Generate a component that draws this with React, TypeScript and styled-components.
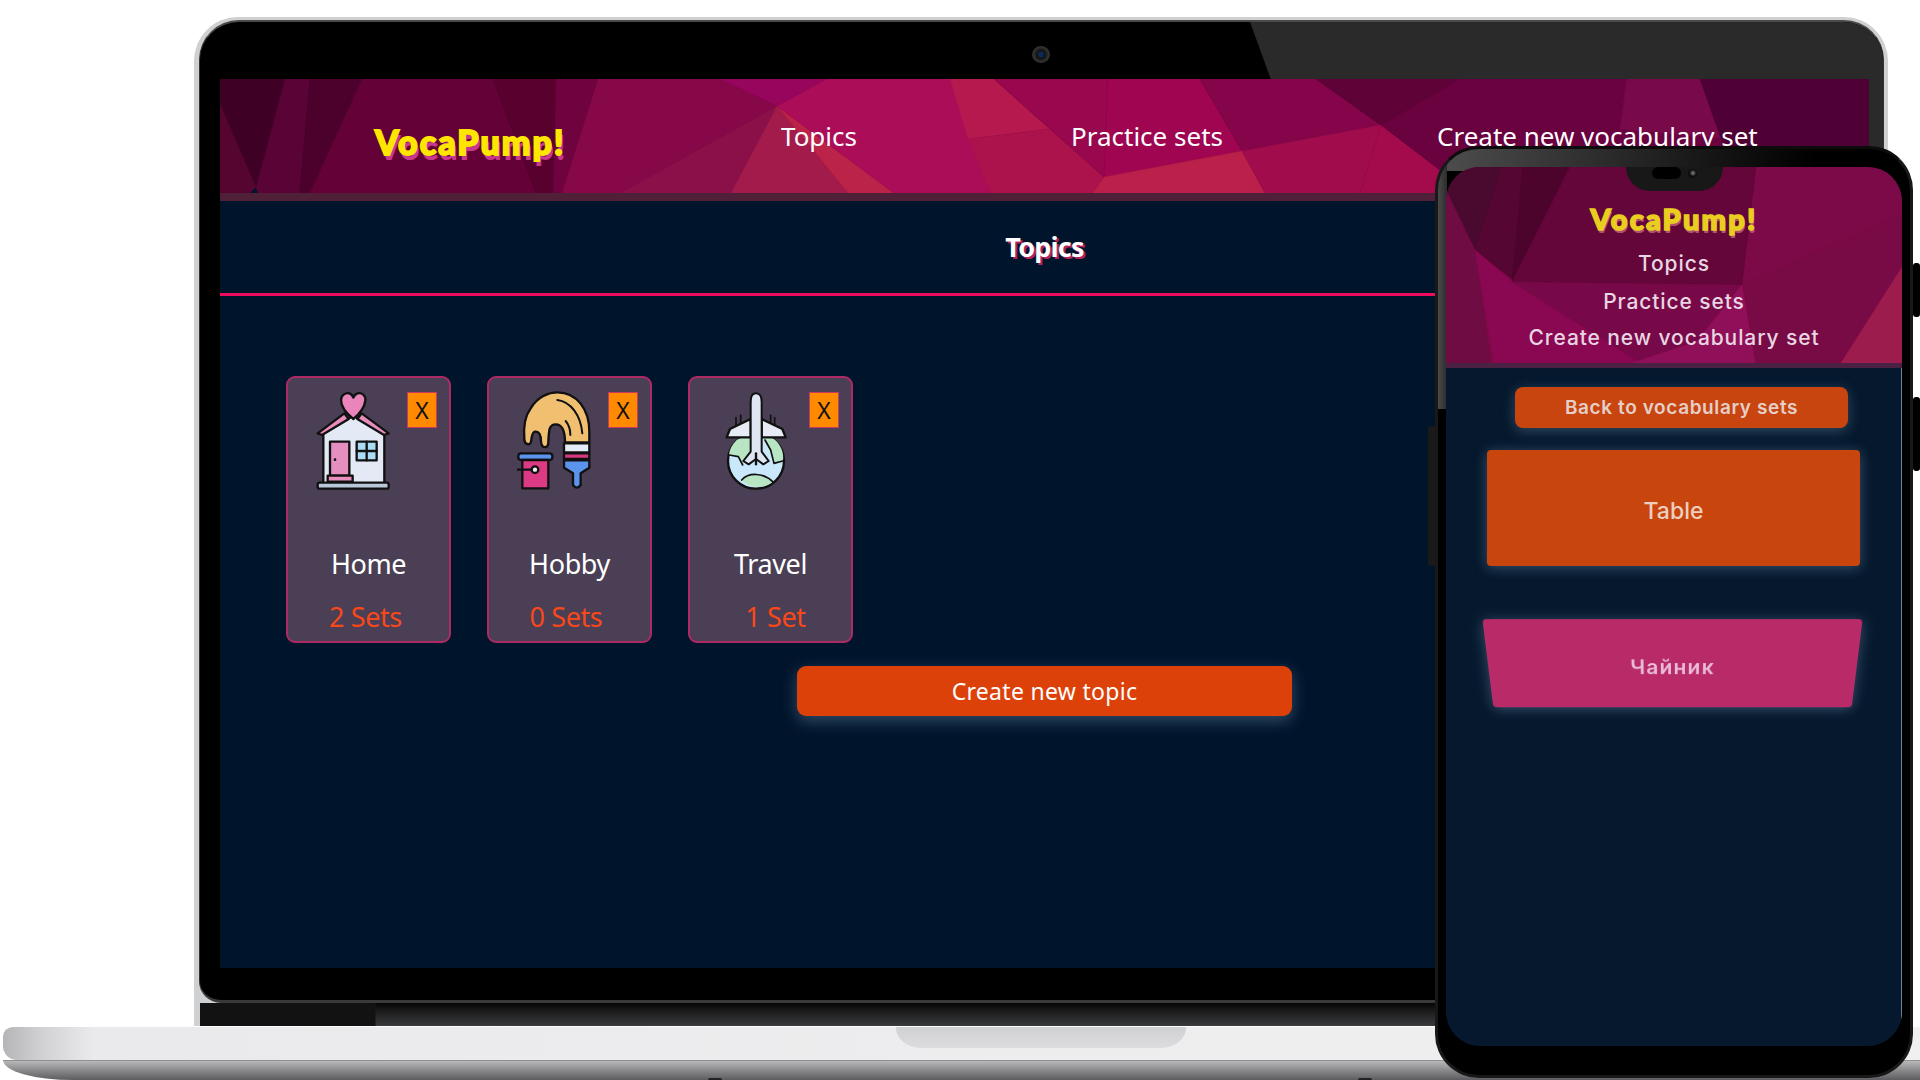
import React from "react";
import styled, { createGlobalStyle } from "styled-components";

const Global = createGlobalStyle`
  html, body { margin: 0; padding: 0; background: #fff; }
  * { box-sizing: border-box; }
`;

const LAPTOP_FONT = `"Noto Sans", "Open Sans", sans-serif`;
const PHONE_FONT = `Inter, "Noto Sans", sans-serif`;

const Stage = styled.div`
  position: relative;
  width: 1920px;
  height: 1080px;
  overflow: hidden;
  background: #fff;
`;

/* ---------- laptop lid ---------- */
const LidShell = styled.div`
  position: absolute;
  left: 194px;
  top: 17px;
  width: 1694px;
  height: 1010px;
  display: flex;
  flex-direction: column;
  padding: 3px 4px 0 5px;
  border-radius: 44px 44px 0 0;
  background: #cfd0d2;
`;
const Bezel = styled.div`
  position: relative;
  flex: none;
  height: 983px;
  padding: 0 15px 0 20px;
  border-top: 2px solid #4a4a4a;
  border-left: 1px solid #333;
  border-right: 1px solid #333;
  border-bottom: 3px solid #3a3a3c;
  border-radius: 40px 40px 22px 22px;
  background: #000;
  overflow: hidden;
`;
const Glare = styled.div`
  position: absolute;
  left: 1050px;
  top: 0;
  width: 640px;
  height: 981px;
  background: #2a2a2a;
  clip-path: polygon(0 0, 100% 0, 100% 100%, 356px 100%);
`;
const CameraBar = styled.div`
  height: 57px;
  display: flex;
  align-items: center;
  justify-content: center;
  padding: 7px 6px 0 0;
`;
const Camera = styled.div`
  width: 18px;
  height: 17px;
  border-radius: 50%;
  background: radial-gradient(circle at 50% 50%, #0b2a58 0 18%, #111 30%, #333 62%, #1a1a1a 100%);
`;
const Hinge = styled.div`
  flex: 1;
  margin-left: 1px;
  background: linear-gradient(90deg, #121212 0 175px, transparent 176px),
    linear-gradient(180deg, #050505 0%, #1a1a1b 30%, #3c3d3f 100%);
`;

const Screen = styled.div`
  position: relative;
  width: 1649px;
  height: 889px;
  background: #00142c;
  display: flex;
  flex-direction: column;
`;
const Header = styled.header`
  position: relative;
  flex: none;
  height: 122px;
  display: flex;
  align-items: center;
  gap: 214px;
  padding: 0 0 1px 155px;
  border-bottom: 8px solid #4f2038;
  font-family: ${LAPTOP_FONT};
  overflow: hidden;
`;
const HeaderArt = styled.svg`
  position: absolute;
  inset: 0;
  width: 100%;
  height: 100%;
`;
const Logo = styled.div`
  position: relative;
  width: 192px;
  margin-top: 13px;
  font-family: Lato, sans-serif;
  font-weight: 900;
  font-size: 34px;
  line-height: 44px;
  letter-spacing: 2px;
  color: #ffe600;
  -webkit-text-stroke: 1.8px #ffe600;
  text-shadow: 2px 5px 0 #c8388f;
  white-space: nowrap;
`;
const NavLink = styled.a`
  position: relative;
  font-size: 26px;
  line-height: 34px;
  color: #fff;
  white-space: nowrap;
`;
const TitleBar = styled.div`
  flex: none;
  height: 95px;
  padding-bottom: 2px;
  display: flex;
  align-items: center;
  justify-content: center;
  border-bottom: 3px solid #ee0a5c;
`;
const Title = styled.h1`
  margin: 0;
  font-family: ${LAPTOP_FONT};
  font-weight: 700;
  font-size: 27px;
  letter-spacing: -0.8px;
  color: #fff;
  text-shadow: 2px 2px 0 #b0245c;
`;
const Cards = styled.div`
  display: flex;
  gap: 36px;
  padding: 80px 0 0 66px;
`;
const Card = styled.article`
  position: relative;
  width: 165px;
  height: 267px;
  padding: 12px 0 0 28px;
  border: 2px solid #ad2a65;
  border-radius: 9px;
  background: #4a3f55;
  display: flex;
  flex-direction: column;
  font-family: ${LAPTOP_FONT};
`;
const CardIcon = styled.svg`
  width: 80px;
  height: 100px;
  flex: none;
`;
const Remove = styled.button`
  position: absolute;
  top: 14px;
  right: 12px;
  width: 30px;
  height: 36px;
  padding: 0;
  border: 1.5px solid #c93a63;
  background: #ff8a00;
  color: #111;
  font-family: ${LAPTOP_FONT};
  font-size: 23px;
  line-height: 30px;
  text-align: center;
`;
const CardName = styled.div`
  margin: 58px 0 0 -28px;
  font-size: 27px;
  line-height: 32px;
  color: #fff;
  text-align: center;
  letter-spacing: -0.4px;
`;
const CardCount = styled.div<{ $before: number; $after: number }>`
  margin: 21px 0 0 -28px;
  padding-left: ${(p) => p.$before}px;
  padding-right: ${(p) => p.$after}px;
  font-size: 27px;
  line-height: 32px;
  color: #f8481a;
  text-align: center;
  letter-spacing: -0.4px;
`;
const CreateRow = styled.div`
  display: flex;
  justify-content: center;
  margin-top: 23px;
`;
const CreateButton = styled.button`
  width: 495px;
  height: 50px;
  border: 0;
  border-radius: 9px;
  background: #dc410a;
  color: #fff;
  font-family: ${LAPTOP_FONT};
  font-size: 23px;
  letter-spacing: 0.3px;
  box-shadow: 0 5px 16px rgba(130, 170, 200, 0.38);
`;

/* ---------- laptop base ---------- */
const Base = styled.div`
  position: absolute;
  left: 3px;
  right: 0;
  top: 1026px;
  height: 54px;
  display: flex;
  flex-direction: column;
`;
const BaseDeck = styled.div`
  flex: none;
  height: 34px;
  padding-left: 893px;
  border-radius: 10px 0 0 14px;
  border-top: 1px solid #fff;
  background: linear-gradient(90deg, #b5b5b7 0, #d2d2d4 40px, #eaeaec 90px, #f0f0f1 100%);
`;
const Notch = styled.div`
  width: 290px;
  height: 21px;
  border-radius: 0 0 26px 26px / 0 0 20px 20px;
  background: linear-gradient(180deg, #d0d1d3, #dcdcde);
`;
const BaseLip = styled.div`
  flex: 1;
  position: relative;
  display: flex;
  align-items: flex-end;
  border-top: 1px solid #909092;
  border-radius: 0 0 0 70px / 0 0 0 20px;
  background: linear-gradient(180deg, #b8b8ba 0%, #8d8d90 45%, #5d5d61 100%);
`;
const Foot = styled.span<{ $gap: number }>`
  width: 14px;
  height: 2px;
  margin-left: ${(p) => p.$gap}px;
  border-radius: 4px 4px 0 0;
  background: #222;
`;

/* ---------- phone ---------- */
const Phone = styled.div`
  position: absolute;
  left: 1435px;
  top: 146px;
  width: 478px;
  height: 932px;
  padding: 18px 8px 29px 8px;
  border: 3px solid #181818;
  border-top-color: #0c0c0c;
  border-radius: 44px;
  background: linear-gradient(90deg, #4a4a4a, #2c2c2c) 0 0 / 9px 260px no-repeat,
    linear-gradient(90deg, #4e4e4e, #222 45%, #000 80%) 0 0 / 100% 22px no-repeat, #000;
`;
const SideKey = styled.span<{ $side: "left" | "right"; $top: number; $height: number }>`
  position: absolute;
  ${(p) => (p.$side === "left" ? "left: -10px;" : "right: -10px;")}
  top: ${(p) => p.$top}px;
  width: 7px;
  height: ${(p) => p.$height}px;
  border-radius: 3px;
  background: ${(p) => (p.$side === "left" ? "#1a1a1a" : "#000")};
`;
const PhoneScreen = styled.div`
  position: relative;
  height: 100%;
  border-radius: 34px;
  overflow: hidden;
  background: #05182d;
  display: flex;
  flex-direction: column;
  font-family: ${PHONE_FONT};
`;
const NotchCut = styled.div`
  position: absolute;
  left: 180px;
  top: 0;
  width: 97px;
  height: 24px;
  display: flex;
  align-items: flex-start;
  justify-content: center;
  gap: 7px;
  background: #181818;
  border-radius: 0 0 24px 24px;
`;
const Speaker = styled.span`
  width: 29px;
  height: 12px;
  border-radius: 7px;
  background: #000;
`;
const FrontCam = styled.span`
  width: 9px;
  height: 9px;
  margin-top: 2px;
  border-radius: 50%;
  background: radial-gradient(circle at 55% 45%, #666 0 15%, #111 45%, #000);
`;
const PhoneHeader = styled.header`
  position: relative;
  flex: none;
  height: 201px;
  padding-top: 34px;
  border-bottom: 5px solid #4a2142;
  display: flex;
  flex-direction: column;
  align-items: center;
  overflow: hidden;
`;
const PhoneLogo = styled.div`
  position: relative;
  font-family: Lato, sans-serif;
  font-weight: 900;
  font-size: 29px;
  line-height: 36px;
  letter-spacing: 2.2px;
  color: #e9cd1f;
  -webkit-text-stroke: 1.6px #e9cd1f;
  text-shadow: 1px 3px 0 #b0506a;
  white-space: nowrap;
`;
const PhoneNav = styled.a<{ $gap: number }>`
  position: relative;
  margin-top: ${(p) => p.$gap}px;
  font-size: 21px;
  line-height: 26px;
  font-weight: 500;
  letter-spacing: 0.9px;
  color: #e8d6e2;
  white-space: nowrap;
`;
const PhoneMain = styled.main`
  flex: 1;
  display: flex;
  flex-direction: column;
  border-right: 1px solid #6f8499;
`;
const BackButton = styled.button`
  align-self: flex-start;
  width: 333px;
  height: 41px;
  margin: 19px 0 0 69px;
  border: 0;
  border-radius: 8px;
  background: #c8450f;
  color: #e6cfc8;
  font-family: ${PHONE_FONT};
  font-size: 19px;
  font-weight: 600;
  letter-spacing: 0.6px;
  box-shadow: 0 3px 14px rgba(110, 145, 175, 0.42);
`;
const WordTile = styled.div`
  align-self: flex-start;
  width: 373px;
  height: 116px;
  margin: 22px 0 0 41px;
  padding-top: 5px;
  display: flex;
  align-items: center;
  justify-content: center;
  border-radius: 4px;
  background: #c8450d;
  color: #eccfc0;
  font-size: 23px;
  font-weight: 500;
  box-shadow: 0 2px 14px rgba(110, 145, 175, 0.48);
`;
const FlippedTile = styled.div`
  align-self: center;
  width: 369px;
  height: 95px;
  margin: 51px 0 0 -2px;
  padding-top: 5px;
  display: flex;
  align-items: center;
  justify-content: center;
  border-radius: 4px;
  background: #b92a68;
  color: #e8bcd6;
  font-size: 21px;
  font-weight: 600;
  letter-spacing: 1.2px;
  transform: perspective(600px) rotateX(-22deg);
  box-shadow: 0 2px 14px rgba(110, 145, 175, 0.48);
`;

/* ---------- artwork ---------- */
type Poly = [string, string];

const laptopPolys: Poly[] = [
  ["0,0 65,0 36,108 0,25", "#3f0025"],
  ["0,25 36,108 30,114 0,114", "#560530"],
  ["65,0 90,0 80,114 38,114 36,108", "#590336"],
  ["90,0 142,0 90,114 80,114", "#4c012c"],
  ["142,0 273,0 316,114 90,114", "#640238"],
  ["273,0 336,0 333,114 316,114", "#58012f"],
  ["336,0 378,0 342,114 333,114", "#6e0340"],
  ["378,0 500,0 557,27 400,114 342,114", "#870849"],
  ["500,0 607,0 557,27", "#98055c"],
  ["557,27 400,114 511,114", "#8b0f48"],
  ["557,27 511,114 628,114", "#a31b4b"],
  ["557,27 628,114 674,114", "#bb2349"],
  ["607,0 730,0 770,114 674,114 557,27", "#ab0d58"],
  ["730,0 774,0 830,50 748,60", "#b5194d"],
  ["748,60 830,50 884,98 873,114 770,114", "#ac124c"],
  ["774,0 888,0 884,98", "#99074f"],
  ["888,0 980,0 1022,72 884,98", "#9f0550"],
  ["980,0 1096,0 1161,46 1022,72", "#85054a"],
  ["1096,0 1239,0 1161,46", "#5f0238"],
  ["884,98 1022,72 1045,114 873,114", "#bb204a"],
  ["1022,72 1161,46 1140,114 1045,114", "#a10d4c"],
  ["1161,46 1140,114 1250,114", "#a40b4c"],
  ["1239,0 1649,0 1649,114 1250,114 1161,46", "#6a0240"],
  ["1407,0 1480,0 1510,60 1400,50", "#780a4a"],
  ["1480,0 1649,0 1649,114 1520,114", "#4f0136"],
];

const phonePolys: Poly[] = [
  ["0,0 456,0 456,196 0,196", "#7d0a48"],
  ["0,0 56,0 29,83 0,23", "#4a0a2f"],
  ["0,23 29,83 45,196 0,196", "#6f0c43"],
  ["56,0 77,0 67,113 29,83", "#560632"],
  ["77,0 124,0 66,115", "#4c042c"],
  ["124,0 310,0 296,118 66,115", "#64063a"],
  ["29,83 66,115 195,196 48,196", "#8a0852"],
  ["66,115 296,118 250,175 185,196 195,196", "#780949"],
  ["296,118 250,175 185,196 310,196", "#8f0f58"],
  ["297,118 456,47 456,100 395,196 310,196", "#780a45"],
  ["456,100 456,196 395,196", "#9c1d4d"],
];

const Ink = { stroke: "#111", strokeWidth: 7, strokeLinejoin: "round" as const, strokeLinecap: "round" as const };

const HomeIcon = () => (
  <CardIcon viewBox="50 15 240 300">
    <path d="M72 145 L162 92 L255 145 V296 H72Z" fill="#e3eaf6" {...Ink} />
    <path d="M55 145 L135 85 L148 102 L68 150Z" fill="#e78cbb" {...Ink} />
    <path d="M268 145 L187 85 L174 102 L254 150Z" fill="#e78cbb" {...Ink} />
    <path d="M162 102 C132 78 125 60 125 45 C125 30 140 22 150 25 C156 27 160 32 162 38 C164 32 168 27 175 25 C188 22 200 32 198 47 C196 65 186 82 162 102Z" fill="#e985bb" {...Ink} />
    <rect x="92" y="170" width="58" height="102" fill="#e58ec0" {...Ink} />
    <circle cx="107" cy="224" r="4" fill="#111" />
    <rect x="172" y="170" width="60" height="56" fill="#aadcf5" {...Ink} />
    <path d="M202 170 V226 M172 198 H232" fill="none" {...Ink} />
    <rect x="85" y="272" width="75" height="18" fill="#e88fbf" {...Ink} />
    <rect x="55" y="293" width="213" height="18" rx="6" fill="#b9c8d8" {...Ink} />
  </CardIcon>
);

const HobbyIcon = () => (
  <CardIcon viewBox="54 15 240 300">
    <path d="M271 172 H198 C198 140 190 118 170 118 C150 118 150 135 148 170 C148 192 128 192 126 170 C126 150 120 138 108 140 C98 142 98 160 96 170 C94 182 78 180 76 165 C72 120 80 90 95 70 C115 35 150 22 175 22 C235 22 271 75 271 140 Z" fill="#f0c070" {...Ink} />
    <path d="M175 45 C215 50 245 90 250 145 M200 108 C210 120 214 135 214 150" fill="none" {...Ink} strokeWidth={6} />
    <rect x="195" y="175" width="76" height="27" fill="#e4edf7" {...Ink} />
    <rect x="195" y="205" width="76" height="17" fill="#d73a80" {...Ink} />
    <path d="M195 226 H271 V248 L245 265 V300 Q234 316 222 300 V265 L195 248Z" fill="#5b94ec" {...Ink} />
    <rect x="58" y="205" width="102" height="20" rx="8" fill="#5b94ec" {...Ink} />
    <rect x="70" y="225" width="78" height="85" fill="#dc3a85" {...Ink} />
    <path d="M55 254 H98" fill="none" {...Ink} />
    <circle cx="108" cy="254" r="10" fill="#eef2f5" {...Ink} />
  </CardIcon>
);

const TravelIcon = () => (
  <CardIcon viewBox="54 15 240 300">
    <ellipse cx="168" cy="228" rx="84" ry="83" fill="#c9e8fb" {...Ink} />
    <path d="M110 165 C95 180 88 195 87 210 L115 215 L128 240 L150 215 L150 155 C135 155 120 158 110 165Z" fill="#b8e6c4" />
    <path d="M190 155 L205 190 L222 235 L248 230 C255 205 240 170 215 158Z" fill="#b8e6c4" />
    <path d="M125 285 C145 262 190 262 218 290 C195 312 150 312 125 285Z" fill="#b8e6c4" />
    <path d="M88 210 L115 215 L128 240 M195 165 L212 195 L222 235 L248 228 M125 285 C145 262 190 262 218 290" fill="none" {...Ink} strokeWidth={5} />
    <path d="M122 90 V118 M212 90 V118 M108 98 V122 M224 98 V122" fill="none" {...Ink} strokeWidth={5} />
    <path d="M152 102 L90 132 L80 157 H152Z" fill="#e6ebf5" {...Ink} />
    <path d="M185 102 L247 132 L257 157 H185Z" fill="#e6ebf5" {...Ink} />
    <path d="M152 50 C152 32 160 25 168 25 C176 25 185 32 185 50 V200 L206 228 L190 238 L168 222 L146 238 L130 228 L152 200Z" fill="#dfe6f3" {...Ink} strokeWidth={6} />
    <path d="M168 205 V238" fill="none" {...Ink} />
  </CardIcon>
);

const topics = [
  { name: "Home", count: "2 Sets", before: 0, after: 6, icon: <HomeIcon /> },
  { name: "Hobby", count: "0 Sets", before: 0, after: 7, icon: <HobbyIcon /> },
  { name: "Travel", count: "1 Set", before: 10, after: 0, icon: <TravelIcon /> },
];

export default function App() {
  return (
    <Stage>
      <Global />
      <LidShell>
        <Bezel>
          <Glare />
          <CameraBar>
            <Camera />
          </CameraBar>
          <Screen>
            <Header>
              <HeaderArt viewBox="0 0 1649 114" preserveAspectRatio="none">
                {laptopPolys.map(([points, fill]) => (
                  <polygon key={points} points={points} fill={fill} stroke={fill} strokeWidth={0.5} />
                ))}
              </HeaderArt>
              <Logo>VocaPump!</Logo>
              <NavLink>Topics</NavLink>
              <NavLink>Practice sets</NavLink>
              <NavLink>Create new vocabulary set</NavLink>
            </Header>
            <TitleBar>
              <Title>Topics</Title>
            </TitleBar>
            <Cards>
              {topics.map((t) => (
                <Card key={t.name}>
                  {t.icon}
                  <Remove>X</Remove>
                  <CardName>{t.name}</CardName>
                  <CardCount $before={t.before} $after={t.after}>{t.count}</CardCount>
                </Card>
              ))}
            </Cards>
            <CreateRow>
              <CreateButton>Create new topic</CreateButton>
            </CreateRow>
          </Screen>
        </Bezel>
        <Hinge />
      </LidShell>

      <Base>
        <BaseDeck>
          <Notch />
        </BaseDeck>
        <BaseLip>
          <Foot $gap={705} />
          <Foot $gap={636} />
        </BaseLip>
      </Base>

      <Phone>
        <SideKey $side="left" $top={277} $height={140} />
        <SideKey $side="right" $top={114} $height={54} />
        <SideKey $side="right" $top={248} $height={74} />
        <PhoneScreen>
          <PhoneHeader>
            <HeaderArt viewBox="0 0 456 196" preserveAspectRatio="none">
              {phonePolys.map(([points, fill]) => (
                <polygon key={points} points={points} fill={fill} stroke={fill} strokeWidth={0.5} />
              ))}
            </HeaderArt>
            <PhoneLogo>VocaPump!</PhoneLogo>
            <PhoneNav $gap={14}>Topics</PhoneNav>
            <PhoneNav $gap={12}>Practice sets</PhoneNav>
            <PhoneNav $gap={10}>Create new vocabulary set</PhoneNav>
          </PhoneHeader>
          <NotchCut>
            <Speaker />
            <FrontCam />
          </NotchCut>
          <PhoneMain>
            <BackButton>Back to vocabulary sets</BackButton>
            <WordTile>Table</WordTile>
            <FlippedTile>Чайник</FlippedTile>
          </PhoneMain>
        </PhoneScreen>
      </Phone>
    </Stage>
  );
}
